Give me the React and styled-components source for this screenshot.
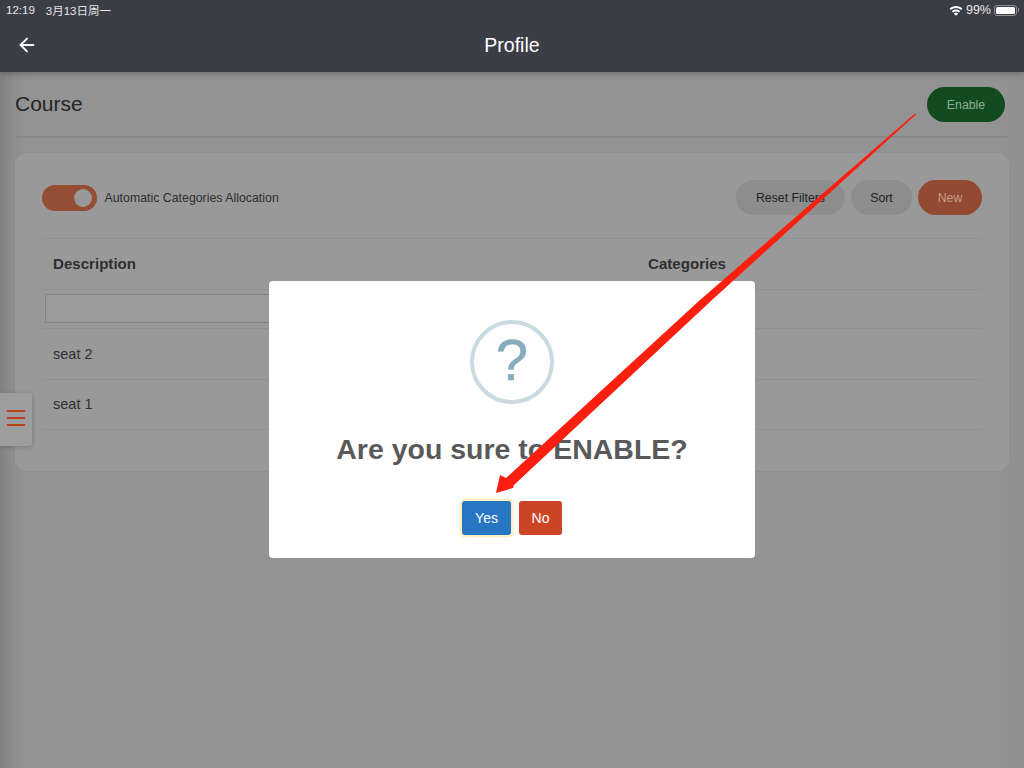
import React from "react";
import styled, { createGlobalStyle } from "styled-components";
import { ArrowLeft } from "lucide-react";

const Global = createGlobalStyle`
  html, body { margin: 0; padding: 0; }
  body { font-family: "Liberation Sans", "Noto Sans CJK SC", sans-serif; background: #929292; }
  * { box-sizing: border-box; }
`;

const Screen = styled.div`
  position: relative;
  width: 1024px;
  height: 768px;
  overflow: hidden;
  background: linear-gradient(90deg, #808080 0, #8e8e8e 14px, #939393 26px, #939393 1000px, #8f8f8f 1024px);
`;

const Header = styled.header`
  height: 72px;
  background: #3b3e47;
  color: #fff;
  box-shadow: 0 2px 6px rgba(0, 0, 0, 0.25);
  display: flex;
  flex-direction: column;
  position: relative;
`;

const StatusBar = styled.div`
  height: 20px;
  padding: 0 7px 0 6px;
  display: flex;
  align-items: center;
  justify-content: space-between;
  font-size: 11.5px;
  color: #e6e6e8;
`;

const StatusGroup = styled.div`
  display: flex;
  align-items: center;
  gap: ${(p) => p.$gap || 3}px;
`;

const BatteryText = styled.span`
  font-size: 12.5px;
`;

const Battery = styled.div`
  width: 23px;
  height: 11px;
  border: 1px solid #8d8f95;
  border-radius: 3px;
  padding: 1px;
  position: relative;
  &::before {
    content: "";
    display: block;
    height: 100%;
    background: #fff;
    border-radius: 1.5px;
  }
  &::after {
    content: "";
    position: absolute;
    right: -3px;
    top: 2.5px;
    width: 1px;
    height: 4px;
    background: #8d8f95;
  }
`;

const NavBar = styled.div`
  flex: 1;
  display: flex;
  align-items: center;
  justify-content: center;
  position: relative;
  font-size: 19.5px;
  margin-bottom: 1px;
`;

const BackButton = styled.span`
  position: absolute;
  left: 16px;
  top: 14px;
  display: flex;
  color: #fff;
`;

const Content = styled.main`
  padding: 0 15px;
`;

const TitleRow = styled.div`
  height: 66px;
  border-bottom: 2px solid #888888;
  display: flex;
  align-items: center;
  justify-content: space-between;
  padding-right: 4px;
  padding-top: 1px;
`;

const Title = styled.h1`
  margin: 0 0 2px;
  font-size: 21px;
  font-weight: 400;
  color: #242424;
`;

const Pill = styled.button`
  height: 35px;
  width: ${(p) => p.$w}px;
  border: 0;
  border-radius: 18px;
  padding: 0;
  font-family: inherit;
  font-size: 12.3px;
  background: ${(p) => p.$bg};
  color: ${(p) => p.$fg};
`;

const Card = styled.section`
  margin-top: 15px;
  height: 318px;
  background: #999999;
  border-radius: 12px;
  padding: 27px 27px 0;
  box-shadow: 0 0 3px rgba(0, 0, 0, 0.05);
`;

const Toolbar = styled.div`
  display: flex;
  align-items: center;
  justify-content: space-between;
  height: 35px;
`;

const ToggleRow = styled.label`
  display: flex;
  align-items: center;
  gap: 7.5px;
  font-size: 12.35px;
  color: #2e2e2e;
`;

const Toggle = styled.span`
  width: 55px;
  height: 26px;
  border-radius: 13px;
  background: #934e34;
  display: flex;
  align-items: center;
  justify-content: flex-end;
  padding-right: 5px;
  &::after {
    content: "";
    width: 18px;
    height: 18px;
    border-radius: 50%;
    background: #999999;
  }
`;

const ButtonGroup = styled.div`
  display: flex;
  gap: 6px;
`;

const Table = styled.div`
  margin-top: 23px;
  border-top: 1px solid #909090;
  color: #2f2f2f;
`;

const Row = styled.div`
  display: grid;
  grid-template-columns: 595px 1fr;
  align-items: ${(p) => (p.$filter ? "start" : "center")};
  height: ${(p) => p.$h}px;
  padding-left: ${(p) => (p.$filter ? 3 : 11)}px;
  padding-top: ${(p) => (p.$filter ? 4 : 0)}px;
  padding-bottom: ${(p) => p.$lift || 0}px;
  border-bottom: 1px solid #909090;
  font-size: ${(p) => (p.$head ? 15.1 : 14.5)}px;
  font-weight: ${(p) => (p.$head ? 700 : 400)};
`;

const FilterInput = styled.div`
  width: 300px;
  height: 29px;
  border: 1px solid #828282;
  border-radius: 1px;
  background: #9b9b9b;
`;

const MenuTab = styled.div`
  position: absolute;
  left: 0;
  top: 393px;
  width: 32px;
  height: 53px;
  background: #9d9d9d;
  border-radius: 0 3px 3px 0;
  box-shadow: 1px 1px 4px rgba(0, 0, 0, 0.2);
  display: flex;
  flex-direction: column;
  justify-content: center;
  gap: 5.5px;
  padding-left: 7px;
  padding-bottom: 3px;
`;

const MenuLine = styled.span`
  display: block;
  width: 18px;
  height: 1.5px;
  background: #b83f1f;
`;

const Overlay = styled.div`
  position: absolute;
  inset: 0;
  padding-top: 71px;
  display: flex;
  align-items: center;
  justify-content: center;
`;

const Modal = styled.div`
  width: 486px;
  height: 277px;
  background: #fff;
  border-radius: 4px;
  display: flex;
  flex-direction: column;
  align-items: center;
  padding-top: 39px;
`;

const QuestionIcon = styled.div`
  width: 84px;
  height: 84px;
  border: 4px solid #c9dae1;
  border-radius: 50%;
  color: #87adbd;
  font-size: 58px;
  line-height: 58px;
  padding-bottom: 4px;
  -webkit-text-stroke: 0.5px #87adbd;
  display: flex;
  align-items: center;
  justify-content: center;
`;

const ModalTitle = styled.h2`
  margin: 28px 0 0;
  font-size: 28.5px;
  line-height: 34px;
  font-weight: 700;
  color: #595959;
`;

const ModalActions = styled.div`
  margin-top: 35px;
  display: flex;
  gap: 8px;
`;

const ModalButton = styled.button`
  height: 34px;
  width: ${(p) => p.$w}px;
  border: 0;
  border-radius: 3px;
  padding: 0;
  color: #fff;
  font-family: inherit;
  font-size: 14px;
  background: ${(p) => p.$bg};
  box-shadow: ${(p) => (p.$focus ? "0 0 0 2.5px #fcefc6" : "none")};
`;

const ArrowSvg = styled.svg`
  position: absolute;
  left: 0;
  top: 0;
  pointer-events: none;
`;

export default function App() {
  return (
    <Screen>
      <Global />
      <Header>
        <StatusBar>
          <StatusGroup $gap={11}>
            <span>12:19</span>
            <span>3月13日周一</span>
          </StatusGroup>
          <StatusGroup>
            <svg width="14" height="11" viewBox="0 0 14 11" fill="#fff">
              <path d="M7 1C4.4 1 2.2 2 .6 3.6l1.3 1.4C3.2 3.7 5 3 7 3s3.8.7 5.1 2l1.3-1.4C11.8 2 9.6 1 7 1z" />
              <path d="M7 4.4c-1.7 0-3.2.7-4.2 1.7l1.3 1.4C4.9 6.8 5.9 6.4 7 6.4s2.1.4 2.9 1.1l1.3-1.4C10.2 5.1 8.7 4.4 7 4.4z" />
              <path d="M7 7.7c-.9 0-1.7.3-2.2.9L7 10.8l2.2-2.2c-.5-.6-1.3-.9-2.2-.9z" />
            </svg>
            <BatteryText>99%</BatteryText>
            <Battery />
          </StatusGroup>
        </StatusBar>
        <NavBar>
          <BackButton>
            <ArrowLeft size={22} strokeWidth={2} />
          </BackButton>
          Profile
        </NavBar>
      </Header>
      <Content>
        <TitleRow>
          <Title>Course</Title>
          <Pill $w={78} $bg="#114b1f" $fg="#8fb096">Enable</Pill>
        </TitleRow>
        <Card>
          <Toolbar>
            <ToggleRow>
              <Toggle />
              Automatic Categories Allocation
            </ToggleRow>
            <ButtonGroup>
              <Pill $w={109} $bg="#8d8d8d" $fg="#222">Reset Filters</Pill>
              <Pill $w={61} $bg="#8d8d8d" $fg="#222">Sort</Pill>
              <Pill $w={64} $bg="#924a32" $fg="#c99a86">New</Pill>
            </ButtonGroup>
          </Toolbar>
          <Table>
            <Row $head $h={51} $lift={1}>
              <span>Description</span>
              <span>Categories</span>
            </Row>
            <Row $filter $h={39}>
              <FilterInput />
            </Row>
            <Row $h={51}>
              <span>seat 2</span>
              <span />
            </Row>
            <Row $h={50} $lift={2}>
              <span>seat 1</span>
              <span />
            </Row>
          </Table>
        </Card>
      </Content>
      <MenuTab>
        <MenuLine />
        <MenuLine />
        <MenuLine />
      </MenuTab>
      <Overlay>
        <Modal>
          <QuestionIcon>?</QuestionIcon>
          <ModalTitle>Are you sure to ENABLE?</ModalTitle>
          <ModalActions>
            <ModalButton $w={49} $bg="#2676c4" $focus>Yes</ModalButton>
            <ModalButton $w={43} $bg="#cc4527">No</ModalButton>
          </ModalActions>
        </Modal>
      </Overlay>
      <ArrowSvg width="1024" height="768" viewBox="0 0 1024 768">
        <polygon points="915,113.5 700,300 506,478 500,475 496,493 513,488 514,485 712,300 916,114.5" fill="#fb1f10" />
      </ArrowSvg>
    </Screen>
  );
}
